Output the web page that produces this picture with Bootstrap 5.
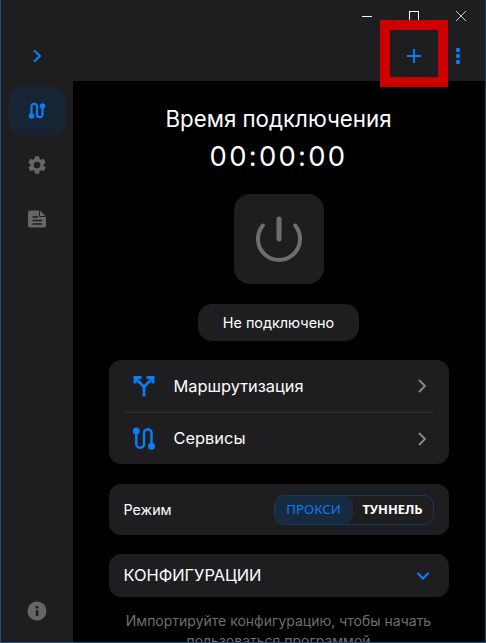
<!DOCTYPE html>
<html lang="ru">

<head>
  <meta charset="UTF-8" />
  <meta name="viewport" content="width=device-width, initial-scale=1.0" />
  <title>Подключение</title>
  <link href="https://cdn.jsdelivr.net/npm/bootstrap@5.3.3/dist/css/bootstrap.min.css" rel="stylesheet" />
  <style>
    html, body { height: 100%; }
    body {
      background: #1e1e20;
      font-family: Inter, "Noto Sans", sans-serif;
      color: #fff;
      overflow: hidden;
    }
    .app-window {
      height: 643px;
      border: 1px solid #17557c;
      border-top: 0;
      border-right-color: #17405c;
      position: relative;
      overflow: hidden;
    }
    .top-area { height: 81px; flex: none; }
    .win-controls { height: 31px; padding-right: 1px; }
    .win-btn { width: 47px; height: 31px; }
    .tool-row { height: 50px; }
    .tool-left { width: 72px; }
    .tool-btn { width: 68px; height: 50px; }
    .more-btn { width: 20px; margin-right: 17px; height: 50px; }
    .side-rail { width: 72px; flex: none; padding: 6px 0 21px; }
    .rail-item { width: 56px; height: 48px; border-radius: 12px; }
    .rail-item + .rail-item { margin-top: 6px; }
    .rail-active { background: #172433; }
    .main-pane { background: #000; min-width: 0; padding: 24px 37px 0 36px; overflow: hidden; }
    .conn-title { font-size: 22.3px; line-height: 26px; margin: 0; margin-top: 1px; }
    .conn-time { font-size: 27.4px; line-height: 34px; letter-spacing: 2.3px; margin-top: 7px; }
    .power-btn { width: 90px; height: 90px; background: #1e1e20; border-radius: 16px; border: 0; margin-top: 21px; }
    .status-pill { width: 161px; height: 37px; background: #1e1e20; border-radius: 14px; font-size: 14.4px; margin-top: 20px; }
    .pane-card { background: #1e1e20; border-radius: 12px; width: 340px; }
    .routes-card { margin-top: 19px; height: 104px; padding: 0 15px; }
    .route-row { height: 52px; font-size: 16.4px; }
    .route-row + .route-row { border-top: 1px solid #2c2c2e; }
    .route-icon { width: 50px; flex: none; padding-left: 8px; }
    .row-chevron { margin-right: 7px; }
    .mode-card { margin-top: 20px; height: 51px; padding: 0 15px; font-size: 14.3px; }
    .mode-switch { border: 1px solid #17395c; border-radius: 10px; width: 160px; height: 30px; font-family: "Noto Sans", sans-serif; overflow: hidden; }
    .mode-on { background: #172a40; color: #0a7cf5; width: 78px; border-radius: 9px; font-size: 13.3px; }
    .mode-off { font-weight: 700; font-size: 12.8px; flex: 1; }
    .config-card { margin-top: 19px; height: 43px; padding: 0 19px 0 15px; font-size: 16.4px; }
    .hint-text { color: #6e6e71; font-size: 14px; line-height: 20px; margin-top: 14px; white-space: nowrap; }
    .red-mark { position: absolute; left: 379px; top: 20px; width: 68px; height: 67px; border: 10px solid #cc0000; pointer-events: none; }
  </style>
</head>

<body>
  <div class="app-window d-flex flex-column">
    <div class="top-area">
      <div class="win-controls d-flex justify-content-end">
        <div class="win-btn d-flex align-items-center justify-content-center">
          <svg width="12" height="12" viewBox="0 0 12 12"><path d="M1 6.500h10" stroke="#fff" fill="none" /></svg>
        </div>
        <div class="win-btn d-flex align-items-center justify-content-center">
          <svg width="12" height="12" viewBox="0 0 12 12"><rect x="1.500" y="1.500" width="9" height="9" stroke="#fff" fill="none" /></svg>
        </div>
        <div class="win-btn d-flex align-items-center justify-content-center">
          <svg width="12" height="12" viewBox="0 0 12 12"><path d="M1 1l10 10M11 1L1 11" stroke="#ccc" fill="none" /></svg>
        </div>
      </div>
      <div class="tool-row d-flex align-items-center">
        <div class="tool-left d-flex align-items-center justify-content-center">
          <svg width="12" height="14" viewBox="0 0 12 14"><path d="M3 1.500L9 7l-6 5.500" stroke="#0a7cf5" stroke-width="2.200" fill="none" /></svg>
        </div>
        <div class="ms-auto d-flex align-items-center">
          <div class="tool-btn d-flex align-items-center justify-content-center">
            <svg width="16" height="16" viewBox="0 0 16 16"><path d="M8 1v14M1 8h14" stroke="#0a7cf5" stroke-width="2" fill="none" /></svg>
          </div>
          <div class="more-btn d-flex align-items-center justify-content-center">
            <svg width="6" height="18" viewBox="0 0 6 18"><circle cx="3" cy="3" r="2.200" fill="#0a7cf5" /><circle cx="3" cy="9" r="2.200" fill="#0a7cf5" /><circle cx="3" cy="15" r="2.200" fill="#0a7cf5" /></svg>
          </div>
        </div>
      </div>
    </div>

    <div class="d-flex flex-grow-1" style="min-height:0">
      <div class="side-rail d-flex flex-column align-items-center">
        <div class="rail-item rail-active d-flex align-items-center justify-content-center">
          <svg width="20" height="20" viewBox="0 0 20 20"><path d="M4.500 15V5.500a2.750 2.750 0 0 1 5.500 0V13.500a2.750 2.750 0 0 0 5.500 0V5" stroke="#0a7cf5" stroke-width="2.200" fill="none" /><circle cx="4.500" cy="15" r="2.800" fill="#0a7cf5" /><circle cx="15.500" cy="5" r="2.800" fill="#0a7cf5" /></svg>
        </div>
        <div class="rail-item d-flex align-items-center justify-content-center">
          <svg width="22" height="22" viewBox="0 0 24 24"><path fill="#666" d="M19.140 12.940c.04-.3.06-.61.06-.94s-.02-.64-.07-.94l2.030-1.580a.49.49 0 0 0 .12-.61l-1.920-3.320a.49.49 0 0 0-.59-.22l-2.390.96c-.5-.38-1.030-.7-1.620-.94l-.36-2.540a.48.48 0 0 0-.48-.41h-3.840a.48.48 0 0 0-.47.41l-.36 2.540c-.59.24-1.130.57-1.620.94l-2.390-.96a.49.49 0 0 0-.59.22L2.740 8.870a.48.48 0 0 0 .12.61l2.030 1.580c-.05.3-.09.63-.09.94s.02.64.07.94l-2.030 1.580a.49.49 0 0 0-.12.61l1.920 3.320c.12.22.37.29.59.22l2.390-.96c.5.38 1.030.7 1.620.94l.36 2.540c.05.24.24.41.48.41h3.840c.24 0 .44-.17.47-.41l.36-2.540c.59-.24 1.130-.56 1.620-.94l2.390.96c.22.08.47 0 .59-.22l1.920-3.320a.48.48 0 0 0-.12-.61zM12 15.600A3.600 3.600 0 1 1 12 8.400a3.600 3.600 0 0 1 0 7.200z" /></svg>
        </div>
        <div class="rail-item d-flex align-items-center justify-content-center">
          <svg width="18" height="18" viewBox="0 0 18 18"><path fill="#666" fill-rule="evenodd" d="M2 .500H12L18 6.500V15.500a2 2 0 0 1-2 2H2a2 2 0 0 1-2-2V2.500a2 2 0 0 1 2-2zM4.500 6.300v1.500H10V6.300zM4.500 9.800v1.500H14V9.800zM4.500 13.200v1.500H14V13.200z" /><path d="M11.500 .500V6.500H17.500" stroke="#1e1e20" fill="none" /></svg>
        </div>
        <div class="mt-auto d-flex">
          <svg width="20" height="20" viewBox="0 0 20 20"><circle cx="10" cy="10" r="9.500" fill="#666" /><rect x="8.800" y="9" width="2.600" height="6" fill="#1e1e20" /><circle cx="10" cy="6.300" r="1.500" fill="#1e1e20" /></svg>
        </div>
      </div>

      <div class="main-pane flex-grow-1 d-flex flex-column align-items-center">
        <h1 class="conn-title fw-normal">Время подключения</h1>
        <div class="conn-time">00:00:00</div>
        <button class="power-btn d-flex align-items-center justify-content-center flex-shrink-0" type="button" aria-label="Подключить">
          <svg width="48" height="48" viewBox="0 0 48 48"><path d="M7.800 10.600A21 21 0 1 0 40.200 10.600" stroke="#6e6e6e" stroke-width="4" stroke-linecap="round" fill="none" /><path d="M24 4v20" stroke="#6e6e6e" stroke-width="5" stroke-linecap="round" fill="none" /></svg>
        </button>
        <div class="status-pill d-flex align-items-center justify-content-center flex-shrink-0">Не подключено</div>

        <div class="pane-card routes-card flex-shrink-0">
          <div class="route-row d-flex align-items-center">
            <div class="route-icon">
              <svg width="24" height="22" viewBox="0 0 24 22" class="d-block"><path d="M12 21.500V13c0-2.500-5-5-8.500-10M12 13c0-2.500 5-5 8.500-10" stroke="#0a7cf5" stroke-width="2.800" fill="none" /><path d="M3 8.500V2.500h6.500M21 8.500V2.500h-6.500" stroke="#0a7cf5" stroke-width="2.800" fill="none" /></svg>
            </div>
            <span>Маршрутизация</span>
            <svg class="ms-auto row-chevron" width="10" height="16" viewBox="0 0 10 16"><path d="M2 2l6 6-6 6" stroke="#8a8a8c" stroke-width="1.800" fill="none" /></svg>
          </div>
          <div class="route-row d-flex align-items-center">
            <div class="route-icon">
              <svg width="24" height="26" viewBox="0 0 24 26" class="d-block"><path d="M4.300 5V18a3.850 3.850 0 0 0 7.700 0V7a3.750 3.750 0 0 1 7.500 0V20" stroke="#0a7cf5" stroke-width="2.500" fill="none" /><circle cx="4.300" cy="5" r="3.500" fill="#0a7cf5" /><circle cx="19.500" cy="20.300" r="3.500" fill="#0a7cf5" /></svg>
            </div>
            <span>Сервисы</span>
            <svg class="ms-auto row-chevron" width="10" height="16" viewBox="0 0 10 16"><path d="M2 2l6 6-6 6" stroke="#8a8a8c" stroke-width="1.800" fill="none" /></svg>
          </div>
        </div>

        <div class="pane-card mode-card d-flex align-items-center justify-content-between flex-shrink-0">
          <span>Режим</span>
          <div class="mode-switch d-flex">
            <div class="mode-on d-flex align-items-center justify-content-center">ПРОКСИ</div>
            <div class="mode-off d-flex align-items-center justify-content-center">ТУННЕЛЬ</div>
          </div>
        </div>

        <div class="pane-card config-card d-flex align-items-center justify-content-between flex-shrink-0">
          <span>КОНФИГУРАЦИИ</span>
          <svg width="14" height="10" viewBox="0 0 14 10"><path d="M1.500 2L7 7.500 12.500 2" stroke="#0a7cf5" stroke-width="2.200" fill="none" /></svg>
        </div>

        <div class="hint-text text-center">Импортируйте конфигурацию, чтобы начать<br>пользоваться программой</div>
      </div>
    </div>
    <div class="red-mark"></div>
  </div>
  <script src="https://cdn.jsdelivr.net/npm/bootstrap@5.3.3/dist/js/bootstrap.bundle.min.js"></script>
</body>

</html>
